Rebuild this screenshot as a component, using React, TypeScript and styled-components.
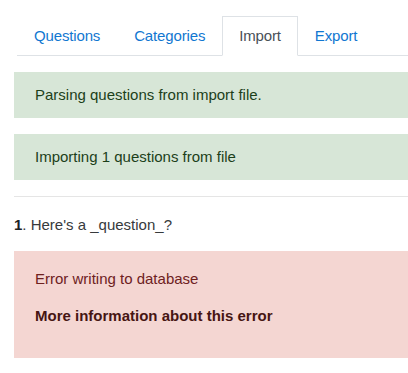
import React from 'react';
import { createGlobalStyle, styled } from 'styled-components';

const GlobalStyle = createGlobalStyle`
  html, body {
    margin: 0;
    padding: 0;
    background: #fff;
  }
  body {
    font-family: "Liberation Sans", Arial, sans-serif;
    font-size: 15px;
    color: #373a3c;
  }
`;

const tabs = ['Questions', 'Categories', 'Import', 'Export'];

export default function App() {
  return (
    <>
      <GlobalStyle />
      <Page>
        <TabList>
          {tabs.map((tab) => (
            <Tab key={tab} $active={tab === 'Import'}>
              {tab}
            </Tab>
          ))}
        </TabList>
        <Alert>Parsing questions from import file.</Alert>
        <Alert>Importing 1 questions from file</Alert>
        <Divider />
        <Question>
          <b>1</b>. Here's a _question_?
        </Question>
        <ErrorBox>
          <ErrorText>Error writing to database</ErrorText>
          <ErrorText>
            <AlertLink href="#">More information about this error</AlertLink>
          </ErrorText>
        </ErrorBox>
      </Page>
    </>
  );
}

// the page is wider than the window in the screenshot, so boxes run off the right edge
const Page = styled.div`
  width: 100%;
  box-sizing: border-box;
  overflow: hidden;
  padding: 16px 0 0 14px;
`;

const TabList = styled.ul`
  display: flex;
  list-style: none;
  margin: 0 0 16px 3px;
  padding: 0;
  border-bottom: 1px solid #dee2e6;
`;

const Tab = styled.li<{ $active?: boolean }>`
  margin-bottom: -1px;
  padding: 8px 16px;
  line-height: 22px;
  letter-spacing: -0.15px;
  border: 1px solid ${({ $active }) => ($active ? '#dee2e6' : 'transparent')};
  border-bottom-color: ${({ $active }) => ($active ? '#fff' : 'transparent')};
  background: ${({ $active }) => ($active ? '#fff' : 'transparent')};
  color: ${({ $active }) => ($active ? '#495057' : '#1177d1')};
  cursor: pointer;
`;

const Alert = styled.div`
  margin: 0 -20px 16.5px 0;
  padding: 11px 20px;
  line-height: 21.5px;
  border: 1px solid #d7e6d7;
  background: #d7e6d7;
  color: #1c3f1a;
`;

const Divider = styled.hr`
  margin: 0 0 17px;
  border: 0;
  border-top: 1px solid #e5e5e5;
`;

const Question = styled.div`
  line-height: 21.5px;
  margin-bottom: 15.5px;
  color: #373a3c;

  b {
    color: #1d2125;
  }
`;

const ErrorBox = styled.div`
  margin-right: -20px;
  padding: 16px 20px;
  border: 1px solid #f4d6d2;
  background: #f4d6d2;
  color: #6e211e;
`;

const ErrorText = styled.p`
  margin: 0 0 15px;
  line-height: 21.5px;
`;

const AlertLink = styled.a`
  font-weight: 700;
  color: #461513;
  text-decoration: none;
`;
